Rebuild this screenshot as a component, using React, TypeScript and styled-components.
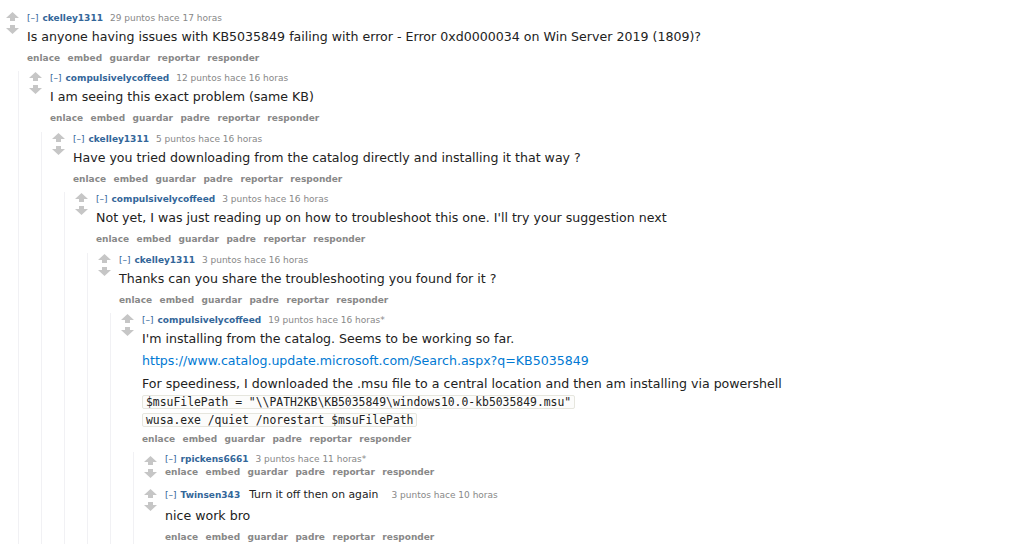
import React from "react";
import styled, { createGlobalStyle } from "styled-components";

const GlobalStyle = createGlobalStyle`
  html, body { margin: 0; padding: 0; background: #ffffff; }
  body { font-family: "DejaVu Sans", Verdana, sans-serif; color: #222222; }
`;

type CommentData = {
  author: string;
  points: string;
  time: string;
  star?: boolean;
  flair?: string;
  body?: React.ReactNode;
  buttons: string[];
  tightButtons?: boolean;
  children?: CommentData[];
};

const Page = styled.div`
  padding-top: 11px;
  width: 1024px;
  height: 548px;
  overflow: hidden;
  box-sizing: border-box;
`;

const CommentBox = styled.div<{ $pad: number; $first: boolean }>`
  padding-left: ${(p) => p.$pad}px;
  margin-top: ${(p) => (p.$first ? 0 : 6.4)}px;
`;

const Row = styled.div`
  display: flex;
  gap: 8px;
`;

const Arrows = styled.div<{ $top: number }>`
  width: 13px;
  flex: 0 0 13px;
  display: flex;
  flex-direction: column;
  gap: 4px;
  padding-top: ${(p) => p.$top}px;
`;

const Entry = styled.div`
  flex: 1;
  min-width: 0;
`;

const Tagline = styled.div<{ $tall: boolean }>`
  font-size: 9px;
  line-height: ${(p) => (p.$tall ? 18 : 14)}px;
  color: #888888;
  white-space: nowrap;
`;

const Collapse = styled.span`
  color: #369;
  margin-right: 4px;
`;

const Author = styled.span`
  color: #369;
  font-weight: bold;
  margin-right: 7px;
`;

const Flair = styled.span`
  color: #222222;
  font-size: 10.8px;
  margin: 0 13px 0 2px;
`;

const Body = styled.div`
  margin-top: 2px;
  font-size: 12.6px;
  line-height: 20px;
  color: #222222;
`;

const Para = styled.p`
  margin: 0;
  & + & {
    margin-top: 2.5px;
  }
`;

const Link = styled.a`
  color: #0079d3;
  text-decoration: none;
`;

const CodeLines = styled.div`
  margin-top: 1px;
  margin-bottom: 5px;
  display: flex;
  flex-direction: column;
  align-items: flex-start;
  gap: 4px;
`;

const Code = styled.code`
  font-family: "DejaVu Sans Mono", "Liberation Mono", monospace;
  font-size: 11.4px;
  line-height: 12px;
  padding: 0 3px;
  background: #fcfcfb;
  border: 1px solid #e6e6de;
  border-radius: 2px;
  color: #222222;
  white-space: pre;
`;

const Buttons = styled.ul<{ $tight: boolean }>`
  list-style: none;
  margin: ${(p) => (p.$tight ? -1 : 4)}px 0 0 0;
  padding: 0;
  display: flex;
  gap: 7.5px;
  font-size: 9px;
  line-height: 14px;
  font-weight: bold;
  color: #888888;
`;

const Children = styled.div`
  margin-left: 12px;
  margin-top: 6.4px;
  border-left: 1px solid #f1f1f4;
`;

const Arrow: React.FC<{ down?: boolean }> = ({ down }) => (
  <svg width="13" height="9" viewBox="0 0 13 9" style={{ display: "block" }}>
    <polygon
      points="6.5,0 13,6 9,6 9,9 4,9 4,6 0,6"
      fill="#c6c6c6"
      transform={down ? "rotate(180 6.5 4.5)" : undefined}
    />
  </svg>
);

const base = ["enlace", "embed", "guardar", "padre", "reportar", "responder"];

const data: CommentData = {
  author: "ckelley1311",
  points: "29 puntos",
  time: "hace 17 horas",
  body: (
    <Para>
      Is anyone having issues with KB5035849 failing with error - Error 0xd0000034 on Win Server 2019 (1809)?
    </Para>
  ),
  buttons: ["enlace", "embed", "guardar", "reportar", "responder"],
  children: [
    {
      author: "compulsivelycoffeed",
      points: "12 puntos",
      time: "hace 16 horas",
      body: <Para>I am seeing this exact problem (same KB)</Para>,
      buttons: base,
      children: [
        {
          author: "ckelley1311",
          points: "5 puntos",
          time: "hace 16 horas",
          body: (
            <Para>Have you tried downloading from the catalog directly and installing it that way ?</Para>
          ),
          buttons: base,
          children: [
            {
              author: "compulsivelycoffeed",
              points: "3 puntos",
              time: "hace 16 horas",
              body: (
                <Para>
                  Not yet, I was just reading up on how to troubleshoot this one. I'll try your suggestion next
                </Para>
              ),
              buttons: base,
              children: [
                {
                  author: "ckelley1311",
                  points: "3 puntos",
                  time: "hace 16 horas",
                  body: <Para>Thanks can you share the troubleshooting you found for it ?</Para>,
                  buttons: base,
                  children: [
                    {
                      author: "compulsivelycoffeed",
                      points: "19 puntos",
                      time: "hace 16 horas",
                      star: true,
                      body: (
                        <>
                          <Para>I'm installing from the catalog. Seems to be working so far.</Para>
                          <Para>
                            <Link href="#">https://www.catalog.update.microsoft.com/Search.aspx?q=KB5035849</Link>
                          </Para>
                          <Para>
                            For speediness, I downloaded the .msu file to a central location and then am installing via powershell
                          </Para>
                          <CodeLines>
                            <Code>{'$msuFilePath = "\\\\PATH2KB\\KB5035849\\windows10.0-kb5035849.msu"'}</Code>
                            <Code>{"wusa.exe /quiet /norestart $msuFilePath"}</Code>
                          </CodeLines>
                        </>
                      ),
                      buttons: base,
                      children: [
                        {
                          author: "rpickens6661",
                          points: "3 puntos",
                          time: "hace 11 horas",
                          star: true,
                          buttons: base,
                          tightButtons: true,
                        },
                        {
                          author: "Twinsen343",
                          points: "3 puntos",
                          time: "hace 10 horas",
                          flair: "Turn it off then on again",
                          body: <Para>nice work bro</Para>,
                          buttons: base,
                        },
                      ],
                    },
                  ],
                },
              ],
            },
          ],
        },
      ],
    },
  ],
};

const Comment: React.FC<{ c: CommentData; root?: boolean; first?: boolean }> = ({ c, root, first }) => {
  const pad = root ? 6 : 10;
  return (
    <CommentBox $pad={pad} $first={!!first}>
      <Row>
        <Arrows $top={c.flair ? 3 : c.body ? 1 : 4}>
          <Arrow />
          <Arrow down />
        </Arrows>
        <Entry>
          <Tagline $tall={!!c.flair}>
            <Collapse>[–]</Collapse>
            <Author>{c.author}</Author>
            {c.flair && <Flair>{c.flair}</Flair>}
            {c.points} {c.time}
            {c.star ? "*" : ""}
          </Tagline>
          {c.body && <Body>{c.body}</Body>}
          <Buttons $tight={!!c.tightButtons}>
            {c.buttons.map((b) => (
              <li key={b}>{b}</li>
            ))}
          </Buttons>
        </Entry>
      </Row>
      {c.children && (
        <Children>
          {c.children.map((ch, i) => (
            <Comment key={i} c={ch} first={i === 0} />
          ))}
        </Children>
      )}
    </CommentBox>
  );
};

export default function App() {
  return (
    <>
      <GlobalStyle />
      <Page>
        <Comment c={data} root first />
      </Page>
    </>
  );
}
